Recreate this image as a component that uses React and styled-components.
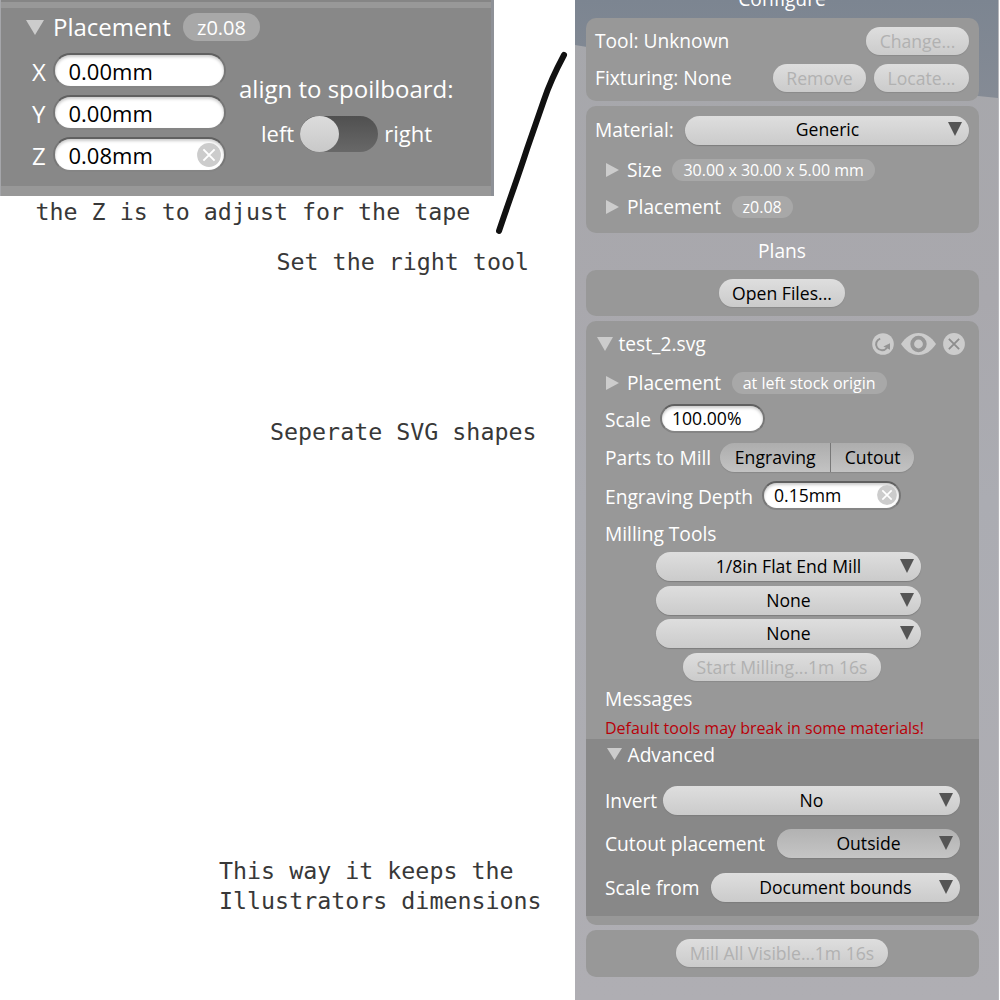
import React from "react";
import styled, { createGlobalStyle } from "styled-components";

const Global = createGlobalStyle`
  * { box-sizing: border-box; }
  body { margin: 0; background: #fff; overflow: hidden; }
`;

const Page = styled.div`
  position: relative;
  display: flex;
  width: 1000px;
  height: 1000px;
  overflow: hidden;
  font-family: "Open Sans", "Noto Sans", sans-serif;
  color: #fff;
`;

const Guide = styled.main`
  width: 575px;
  display: flex;
  flex-direction: column;
`;

const Snippet = styled.section`
  width: 494px;
  height: 196px;
  background: #989898;
  border-left: 1px solid #a5a6aa;
  border-right: 3px solid #8e9197;
  padding: 8px 0 10px;
  box-shadow: inset 0 2px #858585;
`;

const SnippetBody = styled.div`
  height: 178px;
  background: #888;
  padding: 4px 0 0 25px;
`;

const SnippetHeader = styled.div`
  display: flex;
  align-items: center;
  height: 30px;
`;

const SnippetColumns = styled.div`
  display: flex;
  margin-top: 11px;
`;

const Fields = styled.div`
  display: flex;
  flex-direction: column;
  gap: 7px;
  width: 200px;
`;

const Field = styled.label`
  display: flex;
  height: 35px;
  align-items: center;
`;

const Text = styled.span`
  font-size: ${(p) => p.$size || 19.2}px;
  line-height: 1;
  white-space: nowrap;
  flex: none;
  width: ${(p) => (p.$w ? p.$w + "px" : "auto")};
  margin-left: ${(p) => p.$ml || 0}px;
  margin-top: ${(p) => p.$mt || 0}px;
`;

const Gap = styled.span`
  flex: none;
  width: ${(p) => p.$w}px;
`;

const Input = styled.span`
  display: flex;
  align-items: center;
  flex: none;
  width: ${(p) => p.$w}px;
  height: ${(p) => p.$h || 29}px;
  padding-left: ${(p) => (p.$h ? 13.5 : 10)}px;
  padding-right: ${(p) => (p.$h ? 3 : 2)}px;
  border: 2px solid #777;
  border-top-color: #606060;
  border-bottom-color: #858585;
  border-radius: 20px;
  background: #fff;
  box-shadow: inset 0 2px 3px #ccc;
  color: #000;
  justify-content: space-between;
`;

const Align = styled.div`
  display: flex;
  flex-direction: column;
  padding: 24px 0 0 13px;
`;

const ToggleRow = styled.div`
  display: flex;
  align-items: center;
  height: 36px;
  margin-top: 15px;
  padding-left: 22px;
`;

const Toggle = styled.span`
  width: 78px;
  height: 36px;
  margin: 0 6px;
  border-radius: 18px;
  background: linear-gradient(#505050, #686868);
  &::before {
    content: "";
    display: block;
    width: 39px;
    height: 36px;
    border-radius: 50%;
    background: linear-gradient(#dcdcdc, #c9c9c9);
  }
`;

const Note = styled.p`
  margin: ${(p) => p.$mt}px 0 0 ${(p) => p.$ml}px;
  font-family: "DejaVu Sans Mono", "Liberation Mono", monospace;
  font-size: 23.3px;
  line-height: 30px;
  color: #383838;
  white-space: pre;
`;

const Stroke = styled.svg`
  position: absolute;
  left: 489px;
  top: 44px;
`;

const Sidebar = styled.aside`
  position: relative;
  isolation: isolate;
  width: 424px;
  padding: 0 19.5px 0 10.5px;
  border-right: 1px solid #b6b6ba;
  background: linear-gradient(#a6a7ab, #a9a8ad 30%, #abacb2 50%, #afaeb3);
  &::before {
    content: "";
    position: absolute;
    z-index: -1;
    inset: 0 0 auto 0;
    height: 99px;
    background: linear-gradient(#7c8591, #858b95);
    clip-path: polygon(0 0, 100% 0, 100% 98px, 403px 96px, 300px 85px, 12px 47px, 0 45px);
  }
`;

const Heading = styled.h2`
  margin: ${(p) => p.$mt || 0}px 0 0;
  height: ${(p) => p.$h}px;
  padding-top: ${(p) => p.$pt || 0}px;
  font-size: 19.2px;
  font-weight: 400;
  line-height: ${(p) => p.$lh || 20}px;
  text-align: center;
`;

const Panel = styled.section`
  height: ${(p) => p.$h}px;
  margin-bottom: 5px;
  padding: 9px 9.5px 0;
  border-radius: 10px;
  background: #989898;
`;

const Row = styled.div`
  display: flex;
  align-items: center;
  justify-content: ${(p) => p.$justify || "flex-start"};
  height: ${(p) => p.$h || 28}px;
  margin-top: ${(p) => p.$mt || 0}px;
  padding-left: ${(p) => p.$pl || 0}px;
`;

const Spacer = styled.span`
  flex: 1;
`;

const Button = styled.button`
  flex: none;
  width: ${(p) => p.$w}px;
  height: 28px;
  padding: 0;
  border: 0;
  border-radius: 14px;
  background: linear-gradient(#dedede, #cbcbcb);
  box-shadow: 0 1px 1px #8a8a8a;
  color: ${(p) => (p.disabled ? "#b1b1b1" : "#000")};
  font: 400 17.6px/28px "Open Sans", "Noto Sans", sans-serif;
  white-space: nowrap;
`;

const SelectBox = styled.div`
  display: flex;
  align-items: center;
  flex: none;
  width: ${(p) => p.$w}px;
  height: 29px;
  padding-right: 7px;
  border-radius: 15px;
  background: ${(p) => (p.$dark ? "linear-gradient(#b2b2b2, #c5c5c5)" : "linear-gradient(#dedede, #cbcbcb)")};
  box-shadow: 0 1px 1px #7d7d7d;
  color: #000;
`;

const SelectValue = styled.span`
  flex: 1;
  padding-left: 22px;
  text-align: center;
  font-size: 17.6px;
  line-height: 1;
`;

const Segments = styled.div`
  display: flex;
  height: 29px;
  margin-left: 9px;
  border-radius: 15px;
  overflow: hidden;
  box-shadow: 0 1px 1px #888;
`;

const Segment = styled.span`
  width: ${(p) => p.$w}px;
  background: linear-gradient(#adadad, #c3c3c3);
  color: #000;
  font-size: 17.6px;
  line-height: 28px;
  text-align: center;
  & + & { border-left: 1px solid #787878; }
`;

const Pill = styled.span`
  flex: none;
  width: ${(p) => p.$w}px;
  height: ${(p) => p.$h || 22}px;
  margin-left: ${(p) => p.$ml || 0}px;
  border-radius: 14px;
  background: #a8a8a8;
  font-size: ${(p) => p.$size || 16}px;
  line-height: ${(p) => (p.$h ? p.$h + 1 : 23)}px;
  text-align: center;
  white-space: nowrap;
`;

const Icons = styled.div`
  display: flex;
  align-items: center;
  gap: 7px;
  margin-right: 4px;
`;

const Warning = styled.div`
  height: 22px;
  margin-top: 4px;
  padding-left: 10px;
  color: #b80008;
  font-size: 16px;
  line-height: 23px;
  white-space: nowrap;
`;

const Advanced = styled.div`
  height: 177px;
  margin: 0 -9.5px;
  padding: 2px 19px 0 19.5px;
  background: #888;
`;

const Glyph = styled.svg`
  display: block;
  flex: none;
  margin-top: ${(p) => p.$mt || 0}px;
`;

const Down = ({ w = 16, h = 14, fill = "#ccc", mt }) => (
  <Glyph width={w} height={h} viewBox="0 0 16 14" preserveAspectRatio="none" $mt={mt}>
    <path d="M0 0H16L8 14Z" fill={fill} />
  </Glyph>
);

const Right = () => (
  <Glyph width="13" height="14" viewBox="0 0 13 14" $mt={-1}>
    <path d="M0 0L13 7L0 14Z" fill="#ccc" />
  </Glyph>
);

const Close = ({ size = 20, stroke = "#fff" }) => (
  <Glyph width={size} height={size} viewBox="0 0 21 21">
    <circle cx="10.5" cy="10.5" r="10.4" fill="#ccc" />
    <path d="M5.6 5.6L15.4 15.4M15.4 5.6L5.6 15.4" stroke={stroke} strokeWidth="1.7" />
  </Glyph>
);

const Reload = () => (
  <Glyph width="22" height="22" viewBox="0 0 22 22">
    <circle cx="11" cy="11" r="10.8" fill="#ccc" />
    <path d="M8.2 5.6A6 6 0 1 0 14.8 15" fill="none" stroke="#949494" strokeWidth="2" />
    <path d="M18 10.2V16.8L11.4 13.6Z" fill="#949494" />
  </Glyph>
);

const Eye = () => (
  <Glyph width="35" height="22" viewBox="0 0 35 22">
    <path d="M0 11C5 4 10 0 17.5 0S30 4 35 11C30 18 25 22 17.5 22S5 18 0 11Z" fill="#ccc" />
    <circle cx="17.5" cy="11" r="6.3" fill="none" stroke="#979797" strokeWidth="3.8" />
  </Glyph>
);

const Select = ({ w, dark, children }) => (
  <SelectBox $w={w} $dark={dark}>
    <SelectValue>{children}</SelectValue>
    <Down w={14} h={14} fill="#555" mt={-2} />
  </SelectBox>
);

export default function App() {
  return (
    <Page>
      <Global />
      <Guide>
        <Snippet>
          <SnippetBody>
            <SnippetHeader>
              <Down w={18} h={15} />
              <Text $size={24} $ml={9} $w={130}>Placement</Text>
              <Pill $w={77} $h={28} $size={20}>z0.08</Pill>
            </SnippetHeader>
            <SnippetColumns>
              <Fields>
                {[["X", "0.00mm"], ["Y", "0.00mm"], ["Z", "0.08mm"]].map(([axis, value]) => (
                  <Field key={axis}>
                    <Text $size={24} $ml={6} $w={21} $mt={3}>{axis}</Text>
                    <Input $w={173} $h={35}>
                      <Text $size={22}>{value}</Text>
                      {axis === "Z" && <Close size={24} />}
                    </Input>
                  </Field>
                ))}
              </Fields>
              <Align>
                <Text $size={24}>align to spoilboard:</Text>
                <ToggleRow>
                  <Text $size={22} $mt={-2}>left</Text>
                  <Toggle />
                  <Text $size={22} $mt={-2}>right</Text>
                </ToggleRow>
              </Align>
            </SnippetColumns>
          </SnippetBody>
        </Snippet>
        <Note $mt={1} $ml={35.5}>the Z is to adjust for the tape</Note>
        <Note $mt={20} $ml={276.5}>Set the right tool</Note>
        <Note $mt={140} $ml={270}>Seperate SVG shapes</Note>
        <Note $mt={409} $ml={219}>{"This way it keeps the\nIllustrators dimensions"}</Note>
      </Guide>
      <Sidebar>
        <Heading $mt={-2} $h={20} $lh={1}>Configure</Heading>
        <Panel $h={83}>
          <Row>
            <Text>Tool: Unknown</Text>
            <Spacer />
            <Button disabled $w={103}>Change...</Button>
          </Row>
          <Row $mt={9}>
            <Text>Fixturing: None</Text>
            <Spacer />
            <Button disabled $w={93}>Remove</Button>
            <Gap $w={8} />
            <Button disabled $w={95}>Locate...</Button>
          </Row>
        </Panel>
        <Panel $h={127}>
          <Row $h={30}>
            <Text>Material:</Text>
            <Spacer />
            <Select w={284}>Generic</Select>
          </Row>
          <Row $mt={11} $pl={11}>
            <Right />
            <Text $ml={8}>Size</Text>
            <Pill $w={203} $ml={10}>30.00 x 30.00 x 5.00 mm</Pill>
          </Row>
          <Row $mt={9} $pl={11}>
            <Right />
            <Text $ml={8}>Placement</Text>
            <Pill $w={61} $ml={10.5}>z0.08</Pill>
          </Row>
        </Panel>
        <Heading $h={32} $pt={3}>Plans</Heading>
        <Panel $h={46}>
          <Row $justify="center"><Button $w={126}>Open Files...</Button></Row>
        </Panel>
        <Panel $h={604}>
          <Row $pl={1.5}>
            <Down w={16} h={14} />
            <Text $ml={6}>test_2.svg</Text>
            <Spacer />
            <Icons><Reload /><Eye /><Close size={22} stroke="#8d8d8d" /></Icons>
          </Row>
          <Row $mt={11} $pl={11}>
            <Right />
            <Text $ml={8}>Placement</Text>
            <Pill $w={155} $ml={10.5}>at left stock origin</Pill>
          </Row>
          <Row $mt={7} $pl={10}>
            <Text $w={55} $mt={3}>Scale</Text>
            <Input $w={105}><Text $size={17.6} $mt={1}>100.00%</Text></Input>
          </Row>
          <Row $mt={10} $pl={10} $h={30}>
            <Text $mt={1}>Parts to Mill</Text>
            <Segments>
              <Segment $w={110}>Engraving</Segment>
              <Segment $w={84}>Cutout</Segment>
            </Segments>
          </Row>
          <Row $mt={9} $pl={10} $h={28}>
            <Text $mt={3}>Engraving Depth</Text>
            <Spacer />
            <Input $w={139}><Text $size={17.6} $mt={1}>0.15mm</Text><Close /></Input>
            <Gap $w={68} />
          </Row>
          <Row $mt={10} $pl={10}><Text $mt={1}>Milling Tools</Text></Row>
          <Row $mt={5} $pl={60.5} $h={29}><Select w={265}>1/8in Flat End Mill</Select></Row>
          <Row $mt={5} $pl={60.5} $h={29}><Select w={265}>None</Select></Row>
          <Row $mt={4} $pl={60.5} $h={29}><Select w={265}>None</Select></Row>
          <Row $mt={5} $pl={88}><Button disabled $w={198}>Start Milling...1m 16s</Button></Row>
          <Row $mt={4} $pl={10}><Text>Messages</Text></Row>
          <Warning>Default tools may break in some materials!</Warning>
          <Advanced>
            <Row $pl={2}><Down w={15} h={12} mt={-2} /><Text $ml={5.5}>Advanced</Text></Row>
            <Row $mt={17} $h={29}><Text $mt={1}>Invert</Text><Spacer /><Select w={297}>No</Select></Row>
            <Row $mt={14} $h={29}><Text $mt={1}>Cutout placement</Text><Spacer /><Select w={183} dark>Outside</Select></Row>
            <Row $mt={15} $h={29}><Text $mt={1}>Scale from</Text><Spacer /><Select w={249}>Document bounds</Select></Row>
          </Advanced>
        </Panel>
        <Panel $h={47}>
          <Row $justify="center"><Button disabled $w={212}>Mill All Visible...1m 16s</Button></Row>
        </Panel>
      </Sidebar>
      <Stroke width="80" height="196" viewBox="0 0 80 196">
        <path d="M75 11C67 26 61 38 55 56L38 105C30 130 18 163 10 187" fill="none" stroke="#111" strokeWidth="6" strokeLinecap="round" />
      </Stroke>
    </Page>
  );
}
